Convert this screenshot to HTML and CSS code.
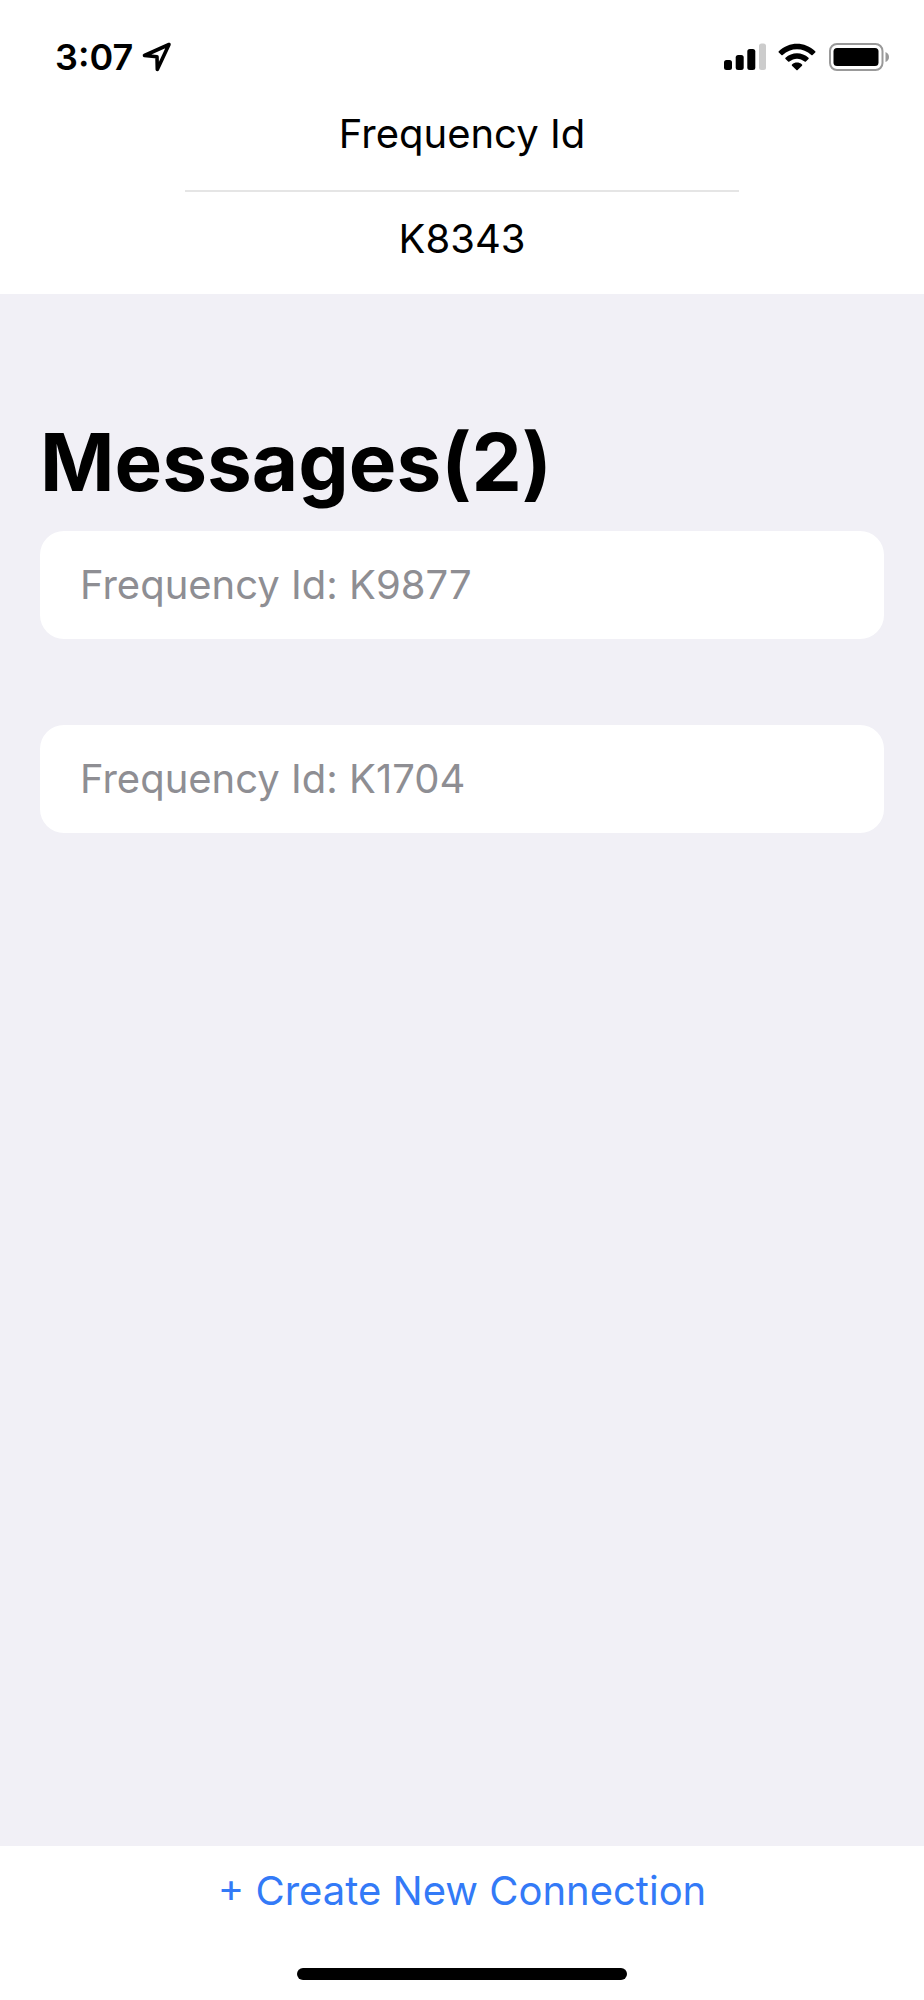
FILE: index.html
```html
<!DOCTYPE html>
<html lang="en">
<head>
<meta charset="utf-8">
<meta name="viewport" content="width=device-width, initial-scale=1">
<title>Messages</title>
<link rel="stylesheet" href="styles.css">
</head>
<body class="app">
<header class="header">
  <div class="status">
    <div class="status-left">
      <time class="clock">3:07</time>
      <svg class="location" width="30" height="30" viewBox="0 0 30 30" aria-hidden="true">
        <path d="M27 2.500 L2.500 13.500 L15 14.800 L15.300 27.500 Z" fill="none" stroke="#000" stroke-width="3.600" stroke-linejoin="round"/>
      </svg>
    </div>
    <div class="status-right">
      <svg width="42" height="28" viewBox="0 0 42 28" aria-hidden="true">
        <rect x="0" y="17" width="8" height="10" rx="2.500"/>
        <rect x="11.700" y="12" width="8" height="15" rx="2.500"/>
        <rect x="23.300" y="6" width="8" height="21" rx="2.500"/>
        <rect x="35" y="0.500" width="7" height="26.500" rx="2.500" fill="#ccc"/>
      </svg>
      <svg width="38" height="28" viewBox="0 0 38 28" aria-hidden="true">
        <path d="M0.800 8.200 C11-1.900 27-1.900 37.200 8.200 Q37.800 8.900 37.200 9.500 L34.600 12 Q34 12.500 33.300 12 C25.300 4.300 12.700 4.300 4.700 12 Q4 12.500 3.400 12 L0.800 9.500 Q0.200 8.900 0.800 8.200Z"/>
        <path d="M7.500 14.800 C13.800 8.600 24.200 8.600 30.500 14.800 Q31.100 15.500 30.500 16.100 L27.900 18.600 Q27.300 19.100 26.600 18.600 C22.200 14.700 15.800 14.700 11.400 18.600 Q10.700 19.100 10.100 18.600 L7.500 16.100 Q6.900 15.500 7.500 14.800Z"/>
        <path d="M14 21.500 C16.800 18.900 21.200 18.900 24 21.500 Q24.600 22.100 24 22.700 L19.600 27 Q19 27.500 18.400 27 L14 22.700 Q13.400 22.100 14 21.500Z"/>
      </svg>
      <svg width="61" height="28" viewBox="0 0 61 28" aria-hidden="true">
        <rect x="2" y="1" width="52.500" height="26" rx="7" fill="none" stroke="#999" stroke-width="2"/>
        <rect x="5.500" y="5" width="45" height="18" rx="3.500"/>
        <path d="M57.500 9 Q61 10.500 61 14 Q61 17.500 57.500 19Z" fill="#999"/>
      </svg>
    </div>
  </div>
  <p class="label">Frequency Id</p>
  <hr class="rule">
  <p class="label">K8343</p>
</header>
<main class="content">
  <h1 class="title">Messages(2)</h1>
  <ul class="messages">
    <li class="card">Frequency Id: K9877</li>
    <li class="card">Frequency Id: K1704</li>
  </ul>
</main>
<footer class="footer">
  <button class="create" type="button">+ Create New Connection</button>
  <div class="home"></div>
</footer>
</body>
</html>
```
FILE: styles.css
```css
* { box-sizing: border-box; }

.app {
  margin: 0;
  min-height: 100vh;
  display: flex;
  flex-direction: column;
  background: #fff;
  color: #000;
  font-family: Inter, "Liberation Sans", sans-serif;
  font-size: 40px;
  line-height: 44px;
}

.header { padding-bottom: 33px; }

.status {
  display: flex;
  justify-content: space-between;
  align-items: center;
  height: 112px;
  padding: 2px 35px 0 55px;
}

.status-left,
.status-right {
  display: flex;
  align-items: center;
  gap: 12px;
}

.status-left { gap: 9px; }

.clock {
  font-size: 36px;
  font-weight: 600;
}

.label {
  margin: 0;
  text-align: center;
}

.rule {
  width: 60%;
  height: 2px;
  margin: 34px auto 25px;
  border: 0;
  background: #e5e5e5;
}

.content {
  flex: 1;
  padding: 120px 40px 40px;
  background: #f1f0f6;
}

.title {
  margin: 0 0 21px;
  font-size: 80px;
  font-weight: 700;
  line-height: 96px;
}

.messages {
  display: grid;
  gap: 86px;
  margin: 0;
  padding: 0;
  list-style: none;
}

.card {
  padding: 32px 40px;
  border-radius: 24px;
  background: #fff;
  color: #8e8e93;
}

.footer {
  display: flex;
  flex-direction: column;
  align-items: center;
  padding: 23px 0 20px;
}

.create {
  padding: 0;
  border: 0;
  background: none;
  color: #337af7;
  font: inherit;
  cursor: pointer;
}

.home {
  width: 330px;
  height: 12px;
  margin-top: 55px;
  border-radius: 6px;
  background: #000;
}
```
